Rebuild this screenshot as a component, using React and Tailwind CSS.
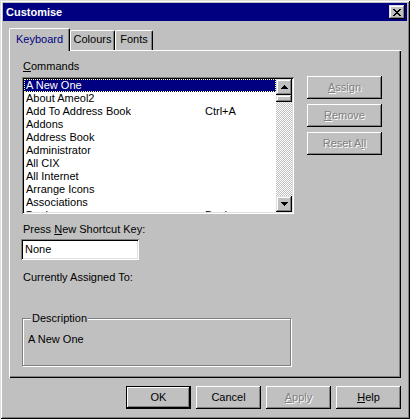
import React from "react";

const raised =
  "shadow-[inset_-1px_-1px_0_#000,inset_1px_1px_0_#fff,inset_-2px_-2px_0_#808080]";
const raisedScroll =
  "shadow-[inset_-1px_-1px_0_#000,inset_1px_1px_0_#dfdfdf,inset_-2px_-2px_0_#808080,inset_2px_2px_0_#fff]";
const sunken =
  "shadow-[inset_1px_1px_0_#808080,inset_-1px_-1px_0_#fff,inset_2px_2px_0_#000,inset_-2px_-2px_0_#dfdfdf]";
const disabledText = "text-[#808080] [text-shadow:1px_1px_0_#fff]";

const commands = [
  { name: "A New One", key: "" },
  { name: "About Ameol2", key: "" },
  { name: "Add To Address Book", key: "Ctrl+A" },
  { name: "Addons", key: "" },
  { name: "Address Book", key: "" },
  { name: "Administrator", key: "" },
  { name: "All CIX", key: "" },
  { name: "All Internet", key: "" },
  { name: "Arrange Icons", key: "" },
  { name: "Associations", key: "" },
  { name: "Books", key: "Books" },
];

// pixel arrows like the old scrollbar glyphs
const Arrow = ({ down }) => (
  <svg width="7" height="4" viewBox="0 0 7 4" shapeRendering="crispEdges">
    <g fill="#000" transform={down ? "rotate(180 3.5 2)" : undefined}>
      <rect x="3" y="0" width="1" height="1" />
      <rect x="2" y="1" width="3" height="1" />
      <rect x="1" y="2" width="5" height="1" />
      <rect x="0" y="3" width="7" height="1" />
    </g>
  </svg>
);

const CloseGlyph = () => (
  <svg width="8" height="7" viewBox="0 0 8 7" shapeRendering="crispEdges">
    <g fill="#000">
      <rect x="0" y="0" width="2" height="1" />
      <rect x="6" y="0" width="2" height="1" />
      <rect x="1" y="1" width="2" height="1" />
      <rect x="5" y="1" width="2" height="1" />
      <rect x="2" y="2" width="4" height="1" />
      <rect x="3" y="3" width="2" height="1" />
      <rect x="2" y="4" width="4" height="1" />
      <rect x="1" y="5" width="2" height="1" />
      <rect x="5" y="5" width="2" height="1" />
      <rect x="0" y="6" width="2" height="1" />
      <rect x="6" y="6" width="2" height="1" />
    </g>
  </svg>
);

const SideButton = ({ children }) => (
  <div
    className={`w-[75px] h-[23px] flex items-center justify-center ${raised} ${disabledText}`}
  >
    {children}
  </div>
);

const App = () => {
  return (
    <div className="w-[410px] h-[419px] bg-[#c0c0c0] p-[3px] flex flex-col text-[11px] leading-[13px] text-black font-['Liberation_Sans',Arial,sans-serif] shadow-[inset_1px_1px_0_#dfdfdf,inset_-1px_-1px_0_#000,inset_2px_2px_0_#fff,inset_-2px_-2px_0_#808080]">
      {/* Title bar */}
      <div className="h-[18px] bg-[#000080] flex items-center justify-between pl-[3px] pr-[2px]">
        <span className="text-white font-bold">Customise</span>
        <div className={`w-[16px] h-[14px] bg-[#c0c0c0] flex items-center justify-center ${raisedScroll}`}>
          <CloseGlyph />
        </div>
      </div>

      {/* Tabs */}
      <div className="mt-[7px] ml-[6px] h-[22px] flex items-end">
        <div className="relative z-10 w-[61px] h-[23px] -mb-[1px] bg-[#c0c0c0] rounded-t-[2px] border-l border-t border-white border-r border-r-black shadow-[inset_-1px_0_0_#808080] pt-[4px] text-center text-[#000080]">
          Keyboard
        </div>
        <div className="w-[45px] h-[20px] rounded-t-[2px] border-l border-t border-white border-r border-r-black shadow-[inset_-1px_0_0_#808080] pt-[2px] text-center">
          Colours
        </div>
        <div className="w-[38px] h-[20px] rounded-t-[2px] border-l border-t border-white border-r border-r-black shadow-[inset_-1px_0_0_#808080] pt-[2px] text-center">
          Fonts
        </div>
      </div>

      {/* Tab panel */}
      <div className="ml-[6px] w-[392px] h-[328px] pl-[12px] pt-[10px] shadow-[inset_1px_1px_0_#fff,inset_-1px_-1px_0_#000,inset_-2px_-2px_0_#808080]">
        <div className="flex">
          <div>
            <div className="ml-[2px]">
              <u>C</u>ommands
            </div>
            <div className={`mt-[4px] ml-[1px] w-[272px] h-[137px] bg-white p-[2px] flex ${sunken}`}>
              <div className="flex-1 overflow-hidden">
                {commands.map((cmd, i) => (
                  <div
                    key={cmd.name}
                    className={`h-[13px] flex pl-[2px] whitespace-nowrap ${
                      i === 0
                        ? "bg-[#000080] text-white outline-1 outline-dotted outline-[#ffffa0] -outline-offset-1"
                        : ""
                    }`}
                  >
                    <span className="w-[179px] shrink-0">{cmd.name}</span>
                    <span>{cmd.key}</span>
                  </div>
                ))}
              </div>
              {/* Scrollbar */}
              <div className="w-[16px] flex flex-col">
                <div className={`h-[16px] bg-[#c0c0c0] flex items-center justify-center ${raisedScroll}`}>
                  <Arrow />
                </div>
                <div className={`h-[7px] bg-[#c0c0c0] ${raisedScroll}`}></div>
                <div className="flex-1 bg-[repeating-conic-gradient(#c0c0c0_0%_25%,#fff_0%_50%)] bg-size-[2px_2px]"></div>
                <div className={`h-[16px] bg-[#c0c0c0] flex items-center justify-center ${raisedScroll}`}>
                  <Arrow down />
                </div>
              </div>
            </div>
          </div>

          <div className="ml-[13px] mt-[16px] flex flex-col gap-[5px]">
            <SideButton>
              <u>A</u>ssign
            </SideButton>
            <SideButton>
              <u>R</u>emove
            </SideButton>
            <SideButton>
              Reset A<u>l</u>l
            </SideButton>
          </div>
        </div>

        <div className="mt-[9px] ml-[2px]">
          Press <u>N</u>ew Shortcut Key:
        </div>
        <div className={`mt-[3px] w-[118px] h-[21px] bg-white pl-[4px] flex items-center ${sunken}`}>
          None
        </div>

        <div className="mt-[11px] ml-[2px]">Currently Assigned To:</div>

        {/* Description group */}
        <div className="mt-[34px] ml-[1px] w-[269px] h-[48px] border border-[#808080] shadow-[1px_1px_0_#fff,inset_1px_1px_0_#fff]">
          <div className="-mt-[7px] ml-[8px] w-fit px-[1px] bg-[#c0c0c0]">Description</div>
          <div className="mt-[8px] ml-[5px]">A New One</div>
        </div>
      </div>

      {/* Dialog buttons */}
      <div className="mt-[8px] mr-[6px] flex justify-end gap-[5px]">
        <div className="w-[65px] h-[23px] flex items-center justify-center shadow-[inset_0_0_0_1px_#000,inset_-2px_-2px_0_#000,inset_2px_2px_0_#fff,inset_-3px_-3px_0_#808080]">
          OK
        </div>
        <div className={`w-[65px] h-[23px] flex items-center justify-center ${raised}`}>Cancel</div>
        <div className={`w-[65px] h-[23px] flex items-center justify-center ${raised} ${disabledText}`}>
          <u>A</u>pply
        </div>
        <div className={`w-[65px] h-[23px] flex items-center justify-center ${raised}`}>
          <u>H</u>elp
        </div>
      </div>
    </div>
  );
};

export default App;
